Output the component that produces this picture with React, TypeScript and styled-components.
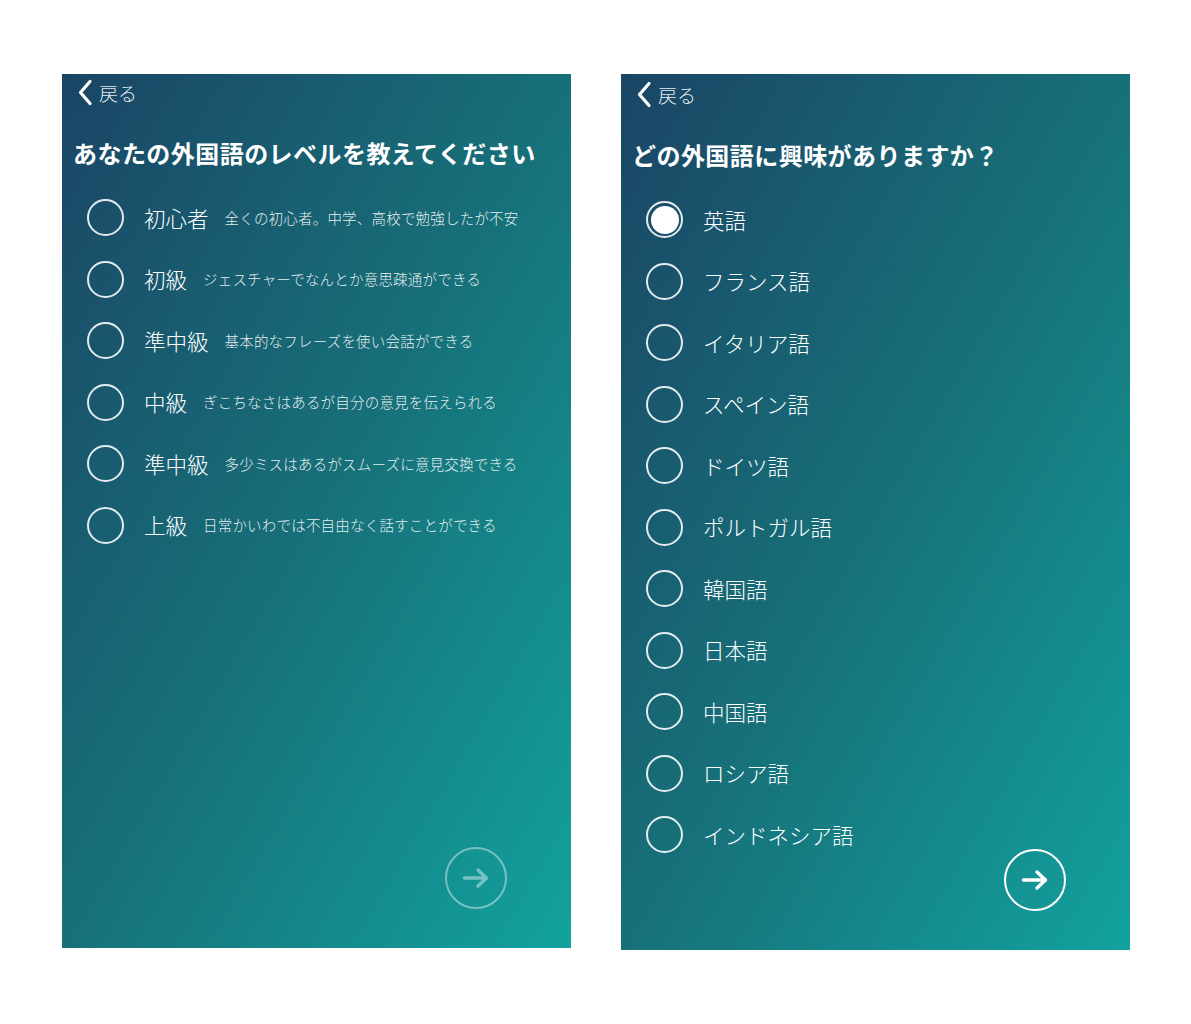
import React from "react";
import styled, { createGlobalStyle } from "styled-components";

const Global = createGlobalStyle`
  html, body { margin: 0; padding: 0; background: #ffffff; }
  body { font-family: "Noto Sans CJK JP", "Noto Sans", sans-serif; }
  * { box-sizing: border-box; }
`;

const Page = styled.div`
  display: flex;
  align-items: flex-start;
  gap: 50px;
  padding: 74px 0 0 62px;
  width: 1191px;
  height: 1024px;
`;

const Panel = styled.section<{ $h: number; $shift: number }>`
  position: relative;
  width: 509px;
  height: ${(p) => p.$h}px;
  padding-top: ${(p) => p.$shift}px;
  display: flex;
  flex-direction: column;
  color: #ffffff;
  background: linear-gradient(to bottom right, #1a4565 0%, #177079 50%, #12a29e 100%);
`;

const Header = styled.div`
  height: 38px;
  margin-top: -1px;
  display: flex;
  align-items: center;
  gap: 6px;
  padding-left: 15px;
`;

const BackText = styled.span`
  font-size: 19px;
  line-height: 1;
  font-weight: 300;
  color: rgba(255, 255, 255, 0.92);
`;

const Title = styled.h1`
  margin: 24px 0 0 11px;
  font-size: 24px;
  line-height: 36px;
  font-weight: 600;
  letter-spacing: 0.45px;
`;

const List = styled.ul`
  list-style: none;
  margin: 16px 0 0 0;
  padding: 0 0 0 25px;
`;

const Row = styled.li`
  height: 61.5px;
  display: flex;
  align-items: center;
`;

const Radio = styled.span<{ $checked?: boolean }>`
  flex: none;
  width: 37px;
  height: 37px;
  border-radius: 50%;
  border: 2px solid rgba(255, 255, 255, 0.88);
  display: flex;
  align-items: center;
  justify-content: center;
  margin-right: 20px;
  &::after {
    content: "";
    display: ${(p) => (p.$checked ? "block" : "none")};
    width: 28px;
    height: 28px;
    border-radius: 50%;
    background: #ffffff;
  }
`;

const Label = styled.span`
  font-size: 21.5px;
  line-height: 1;
  font-weight: 300;
  color: #ffffff;
  white-space: nowrap;
  margin-top: -1px;
`;

const Desc = styled.span`
  margin-left: 16px;
  font-size: 14.5px;
  line-height: 1;
  font-weight: 300;
  letter-spacing: 0.2px;
  color: rgba(255, 255, 255, 0.9);
  white-space: nowrap;
`;

const NextButton = styled.button<{ $enabled?: boolean }>`
  position: absolute;
  right: 64px;
  bottom: 39px;
  width: 62px;
  height: 62px;
  border-radius: 50%;
  border: 2.5px solid #ffffff;
  background: transparent;
  padding: 0;
  display: flex;
  align-items: center;
  justify-content: center;
  opacity: ${(p) => (p.$enabled ? 1 : 0.42)};
  cursor: pointer;
`;

const ChevronLeft = () => (
  <svg width="16" height="27" viewBox="0 0 16 27" fill="none">
    <path d="M13 2.5 L3.5 13.5 L13 24.5" stroke="#ffffff" strokeWidth="3.2" strokeLinecap="round" strokeLinejoin="round" />
  </svg>
);

const ArrowRight = () => (
  <svg width="28" height="22" viewBox="0 0 28 22" fill="none">
    <path d="M2.5 11 H24.5 M16 3 L24.5 11 L16 19" stroke="#ffffff" strokeWidth="3.4" strokeLinecap="round" strokeLinejoin="round" />
  </svg>
);

const levels = [
  { label: "初心者", desc: "全くの初心者。中学、高校で勉強したが不安" },
  { label: "初級", desc: "ジェスチャーでなんとか意思疎通ができる" },
  { label: "準中級", desc: "基本的なフレーズを使い会話ができる" },
  { label: "中級", desc: "ぎこちなさはあるが自分の意見を伝えられる" },
  { label: "準中級", desc: "多少ミスはあるがスムーズに意見交換できる" },
  { label: "上級", desc: "日常かいわでは不自由なく話すことができる" },
];

const languages = [
  "英語",
  "フランス語",
  "イタリア語",
  "スペイン語",
  "ドイツ語",
  "ポルトガル語",
  "韓国語",
  "日本語",
  "中国語",
  "ロシア語",
  "インドネシア語",
];

const Back = () => (
  <Header>
    <ChevronLeft />
    <BackText>戻る</BackText>
  </Header>
);

export default function App() {
  return (
    <>
      <Global />
      <Page>
        <Panel $h={874} $shift={0}>
          <Back />
          <Title>あなたの外国語のレベルを教えてください</Title>
          <List>
            {levels.map((l, i) => (
              <Row key={i}>
                <Radio />
                <Label>{l.label}</Label>
                <Desc>{l.desc}</Desc>
              </Row>
            ))}
          </List>
          <NextButton aria-label="次へ">
            <ArrowRight />
          </NextButton>
        </Panel>
        <Panel $h={876} $shift={2}>
          <Back />
          <Title>どの外国語に興味がありますか？</Title>
          <List>
            {languages.map((l, i) => (
              <Row key={l}>
                <Radio $checked={i === 0} />
                <Label>{l}</Label>
              </Row>
            ))}
          </List>
          <NextButton $enabled aria-label="次へ">
            <ArrowRight />
          </NextButton>
        </Panel>
      </Page>
    </>
  );
}
